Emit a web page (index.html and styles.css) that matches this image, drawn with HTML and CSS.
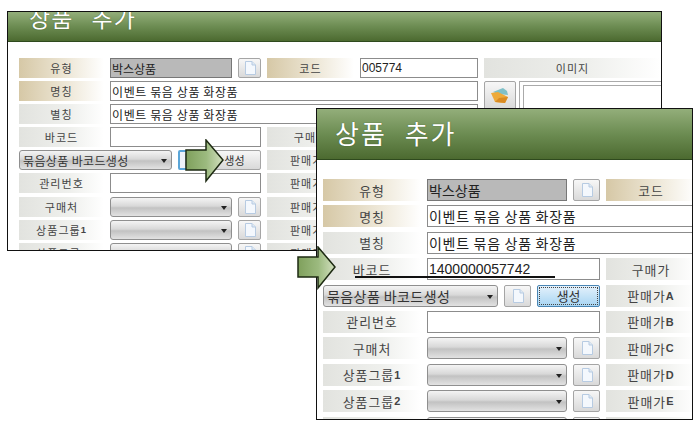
FILE: index.html
```html
<!DOCTYPE html>
<html lang="en">

<head>
  <meta charset="utf-8">
  <title>상품 추가</title>
  <link rel="stylesheet" href="styles.css">
</head>

<body>
  <svg class="defs" width="0" height="0">
    <symbol id="doc" viewBox="0 0 12 14">
      <path d="M1.5 .5H8L11.5 4V13.5H1.5Z" fill="#f4f8fd" stroke="#b7cbe2"/>
      <path d="M8 .5V4H11.5" fill="#dfe9f4" stroke="#b7cbe2"/>
    </symbol>
  </svg>

  <div class="stage">
    <!-- back window -->
    <section class="win win-back">
      <header class="win-head"><h1>상품 추가</h1></header>
      <div class="form">
        <div class="lbl tan">유형</div>
        <div class="box grey">박스상품</div>
        <div class="btn"><svg class="doc"><use href="#doc"/></svg></div>
        <div class="lbl right tan">코드</div>
        <div class="box num">005774</div>
        <div class="lbl plain side">이미지</div>

        <div class="lbl tan">명칭</div>
        <div class="box wide">이벤트 묶음 상품 화장품</div>
        <div class="picture">
          <div class="btn folder">
            <svg width="20" height="17" viewBox="0 0 20 17">
              <path d="M3 5L13 1L17 4L18 8L8 7Z" fill="#7fc0c8"/>
              <path d="M1 6L8 5L18 10L15 16L5 15Z" fill="#eeaa3a"/>
              <path d="M5 15L15 16L18 10L9 11Z" fill="#d98a22"/>
            </svg>
          </div>
          <div class="frame"><div class="frame-in"></div></div>
        </div>

        <div class="lbl plain">별칭</div>
        <div class="box wide">이벤트 묶음 상품 화장품</div>

        <div class="lbl plain">바코드</div>
        <div class="box mid"></div>
        <div class="lbl right plain">구매가</div>

        <div class="gen">
          <div class="sel">묶음상품 바코드생성</div>
          <div class="btn focus"><svg class="doc"><use href="#doc"/></svg></div>
          <div class="btn run">생성</div>
        </div>
        <div class="lbl right plain">판매가<b>A</b></div>

        <div class="lbl plain">관리번호</div>
        <div class="box mid"></div>
        <div class="lbl right plain">판매가<b>B</b></div>

        <div class="lbl plain">구매처</div>
        <div class="sel"></div>
        <div class="btn"><svg class="doc"><use href="#doc"/></svg></div>
        <div class="lbl right plain">판매가<b>C</b></div>

        <div class="lbl plain">상품그룹<b>1</b></div>
        <div class="sel"></div>
        <div class="btn"><svg class="doc"><use href="#doc"/></svg></div>
        <div class="lbl right plain">판매가<b>D</b></div>

        <div class="lbl plain">상품그룹<b>2</b></div>
        <div class="sel"></div>
        <div class="btn"><svg class="doc"><use href="#doc"/></svg></div>
        <div class="lbl right plain">판매가<b>E</b></div>
      </div>
    </section>

    <!-- front window -->
    <section class="win win-front">
      <header class="win-head"><h1>상품 추가</h1></header>
      <div class="form">
        <div class="lbl tan">유형</div>
        <div class="box grey">박스상품</div>
        <div class="btn"><svg class="doc"><use href="#doc"/></svg></div>
        <div class="lbl right tan">코드</div>

        <div class="lbl tan">명칭</div>
        <div class="box wide">이벤트 묶음 상품 화장품</div>

        <div class="lbl plain">별칭</div>
        <div class="box wide">이벤트 묶음 상품 화장품</div>

        <div class="lbl plain">바코드</div>
        <div class="box mid num">1400000057742</div>
        <div class="lbl right plain">구매가</div>

        <div class="gen">
          <div class="sel">묶음상품 바코드생성</div>
          <div class="btn"><svg class="doc"><use href="#doc"/></svg></div>
          <div class="btn run active"><span>생성</span></div>
        </div>
        <div class="lbl right plain">판매가<b>A</b></div>

        <div class="lbl plain">관리번호</div>
        <div class="box mid"></div>
        <div class="lbl right plain">판매가<b>B</b></div>

        <div class="lbl plain">구매처</div>
        <div class="sel"></div>
        <div class="btn"><svg class="doc"><use href="#doc"/></svg></div>
        <div class="lbl right plain">판매가<b>C</b></div>

        <div class="lbl plain">상품그룹<b>1</b></div>
        <div class="sel"></div>
        <div class="btn"><svg class="doc"><use href="#doc"/></svg></div>
        <div class="lbl right plain">판매가<b>D</b></div>

        <div class="lbl plain">상품그룹<b>2</b></div>
        <div class="sel"></div>
        <div class="btn"><svg class="doc"><use href="#doc"/></svg></div>
        <div class="lbl right plain">판매가<b>E</b></div>

        <div class="lbl plain"></div>
        <div class="sel"></div>
        <div class="btn"></div>
        <div class="lbl right plain"></div>
      </div>
    </section>

    <div class="underline"></div>

    <svg class="arrow arrow-back" width="40" height="44" viewBox="0 0 40 44">
      <path d="M1 11H21V1L38 21L21 42V31H1Z" fill="url(#arrowFill)" stroke="#1d2a12" stroke-width="1.5"/>
    </svg>
    <svg class="arrow arrow-front" width="40" height="44" viewBox="0 0 40 44">
      <defs>
        <linearGradient id="arrowFill" x1="0" y1="0" x2="1" y2="0">
          <stop offset="0" stop-color="#7fa05c"/>
          <stop offset=".55" stop-color="#9cba7f"/>
          <stop offset="1" stop-color="#d3e0c0"/>
        </linearGradient>
      </defs>
      <path d="M1 11H21V1L38 21L21 42V31H1Z" fill="url(#arrowFill)" stroke="#1d2a12" stroke-width="1.5"/>
    </svg>
  </div>
</body>

</html>
```

FILE: styles.css
```css
* {
  box-sizing: border-box;
}

body {
  margin: 0;
  background-color: #fff;
  font-family: "Noto Sans CJK KR", "Liberation Sans", sans-serif;
  color: #333;
}

.defs {
  display: block;
}

.stage {
  position: relative;
  width: 700px;
  height: 432px;
  overflow: hidden;
}

.win {
  position: absolute;
  overflow: hidden;
  background-color: #fff;
  border: 1px solid #111;
}

.win-back {
  left: 7px;
  top: 11px;
  width: 655px;
  height: 240px;
}

.win-front {
  left: 316px;
  top: 108px;
  width: 377px;
  height: 312px;
}

.win-head {
  display: flex;
  align-items: flex-end;
  background: linear-gradient(#93ae7a, #6c8c52 50%, #4c6a30);
  border-bottom: 1px solid #2f4a1e;
}

.win-head h1 {
  margin: 0;
  color: #fff;
  font-weight: 400;
  line-height: 1;
  white-space: nowrap;
  text-shadow: 0 0 1px #2f4a1e;
}

.win-back .win-head {
  height: 30px;
  padding: 0 0 12px 21px;
}

.win-back .win-head h1 {
  font-size: 23px;
  letter-spacing: 1px;
  word-spacing: 12px;
}

.win-front .win-head {
  height: 51px;
  padding: 0 0 13px 18px;
}

.win-front .win-head h1 {
  font-size: 26px;
  letter-spacing: 2px;
  word-spacing: 10px;
}

.form {
  display: grid;
}

.win-back .form {
  grid-template-columns: 85px 122px 23px 87px 118px 177px;
  grid-auto-rows: 20px;
  gap: 3.1px 6px;
  padding: 16px 0 0 11px;
  font-size: 12px;
}

.win-front .form {
  grid-template-columns: 98px 140px 27px 90px 100px 100px;
  grid-auto-rows: 22px;
  gap: 4.4px 6px;
  padding: 19px 0 0 6px;
  font-size: 14px;
}

.lbl {
  grid-column: 1;
  display: flex;
  align-items: center;
  justify-content: center;
  font-size: .92em;
  letter-spacing: 1px;
  white-space: nowrap;
  color: #444;
}

.lbl b {
  font-family: "Liberation Sans", sans-serif;
  font-size: .85em;
}

.right {
  grid-column: 4;
}

.side {
  grid-column: 6;
}

.tan {
  background: linear-gradient(90deg, #d6c8a6, #efe9da 60%, #fff);
}

.plain {
  background: linear-gradient(90deg, #e2e3df, #eff0ed 60%, #fff);
}

.box {
  display: flex;
  align-items: center;
  padding-left: 1px;
  background-color: #fff;
  border: 1px solid #8c8c8c;
  color: #222;
  letter-spacing: .05em;
  white-space: nowrap;
  overflow: hidden;
}

.grey {
  background-color: #b9b9b9;
  border-color: #777;
  letter-spacing: 0;
}

.wide {
  grid-column: 2 / 6;
}

.mid {
  grid-column: 2 / 4;
}

.num {
  font-family: "Liberation Sans", sans-serif;
  letter-spacing: 0;
}

.btn {
  display: flex;
  align-items: center;
  justify-content: center;
  border: 1px solid #a5a5a5;
  border-radius: 2px;
  background: linear-gradient(#f7f7f7, #d9d9d9);
  font-size: .92em;
}

.doc {
  width: 12px;
  height: 14px;
}

.focus {
  border: 2px solid #5ba6d8;
  background: #eef3f8;
}

.run {
  flex: 1;
}

.active {
  padding: 1px;
  border: 1px solid #4a86b4;
  background: linear-gradient(#e4f1fb, #a7d5f3);
  color: #333;
}

.active span {
  flex: 1;
  align-self: stretch;
  display: flex;
  align-items: center;
  justify-content: center;
  border: 1px dotted #444;
}

.sel {
  position: relative;
  display: flex;
  align-items: center;
  padding-left: 3px;
  border: 1px solid #8f8f8f;
  border-radius: 3px;
  background: linear-gradient(#f4f4f4, #d8d8d8 45%, #c2c2c2 55%, #e2e2e2);
  letter-spacing: .03em;
  white-space: nowrap;
}

.sel::after {
  content: "";
  position: absolute;
  right: 4px;
  top: 50%;
  margin-top: -1px;
  border: 3px solid transparent;
  border-top: 4px solid #222;
  border-bottom: 0;
}

.gen {
  grid-column: 1 / 4;
  display: flex;
  gap: 6px;
}

.gen .sel {
  flex: none;
}

.win-back .gen .sel {
  width: 153px;
}

.win-back .gen .focus {
  width: 24px;
}

.win-front .gen .sel {
  width: 175px;
}

.win-front .gen .btn:not(.run) {
  width: 27px;
}

.picture {
  grid-column: 6;
  grid-row: 2 / 5;
  display: flex;
  gap: 3px;
}

.folder {
  flex: none;
  width: 32px;
  height: 29px;
}

.frame {
  flex: 1;
  padding: 3px 0 0 3px;
  border: 1px solid #aaa;
  border-right: 0;
  border-bottom: 0;
}

.frame-in {
  height: 100%;
  border: 1px solid #aaa;
  border-right: 0;
}

.underline {
  position: absolute;
  left: 355px;
  top: 276px;
  width: 200px;
  height: 2px;
  background-color: #111;
}

.arrow {
  position: absolute;
}

.arrow-back {
  left: 185px;
  top: 139px;
}

.arrow-front {
  left: 297px;
  top: 246px;
}
```
